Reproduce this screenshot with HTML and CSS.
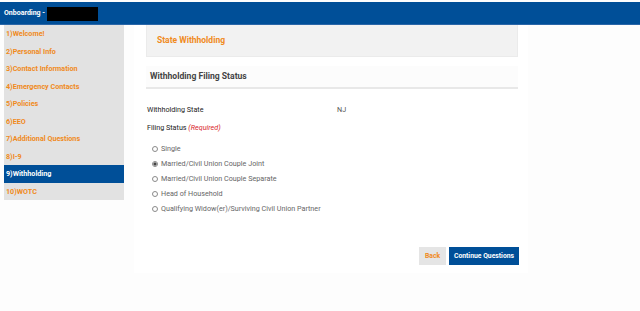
FILE: index.html
```html
<!DOCTYPE html>
<html lang="en">
<head>
    <meta charset="UTF-8">
    <meta name="viewport" content="width=device-width, initial-scale=1.0">
    <title>Onboarding - Withholding</title>
    <link rel="stylesheet" href="styles.css">
</head>
<body>
    <div class="topbar">
        <span class="brand">Onboarding -</span>
        <span class="redacted"></span>
    </div>

    <div class="layout">
        <ul class="steps">
            <li>1)Welcome!</li>
            <li>2)Personal Info</li>
            <li>3)Contact Information</li>
            <li>4)Emergency Contacts</li>
            <li>5)Policies</li>
            <li>6)EEO</li>
            <li>7)Additional Questions</li>
            <li>8)I-9</li>
            <li class="active">9)Withholding</li>
            <li>10)WOTC</li>
        </ul>

        <div class="main">
            <div class="page-title">State Withholding</div>

            <div class="section-title">Withholding Filing Status</div>

            <div class="field-row first">
                <span class="field-label">Withholding State</span>
                <span class="field-value">NJ</span>
            </div>

            <div class="field-row">
                <span class="field-label">Filing Status <em class="required">(Required)</em></span>
            </div>

            <div class="radios">
                <label class="radio"><input type="radio" name="filing"> Single</label>
                <label class="radio"><input type="radio" name="filing" checked> Married/Civil Union Couple Joint</label>
                <label class="radio"><input type="radio" name="filing"> Married/Civil Union Couple Separate</label>
                <label class="radio"><input type="radio" name="filing"> Head of Household</label>
                <label class="radio"><input type="radio" name="filing"> Qualifying Widow(er)/Surviving Civil Union Partner</label>
            </div>

            <div class="actions">
                <button class="btn-back">Back</button>
                <button class="btn-continue">Continue Questions</button>
            </div>
        </div>
    </div>
</body>
</html>
```

FILE: styles.css
```css
body {
    margin: 0;
    font-family: Roboto, "Liberation Sans", Arial, sans-serif;
    background-color: #fdfdfd;
    color: #333;
}
.topbar {
    margin-top: 2px;
    height: 22px;
    background-color: #004f98;
    display: flex;
    align-items: center;
    padding-left: 4px;
    border-bottom: 1px solid #2a66a8;
}
.brand {
    color: white;
    font-weight: bold;
    font-size: 7px;
}
.redacted {
    display: inline-block;
    width: 51px;
    height: 14px;
    background: black;
    margin-left: 2px;
    margin-top: 2px;
}
.layout {
    display: flex;
    align-items: flex-start;
}
.steps {
    list-style: none;
    margin: 0 0 0 4px;
    padding: 0;
    width: 120px;
    background-color: #e2e2e2;
}
.steps li {
    height: 17.5px;
    line-height: 17.5px;
    padding-left: 2px;
    font-size: 7.2px;
    font-weight: bold;
    color: #f08a1c;
}
.steps li.active {
    background-color: #004f98;
    color: white;
}
.main {
    width: 394px;
    margin-left: 10px;
    background: white;
    padding: 0 10px 7px 12px;
    box-sizing: border-box;
    height: 248px;
}
.page-title {
    background-color: #f2f2f2;
    border: 1px solid #ebebeb;
    border-top: none;
    height: 31px;
    line-height: 31px;
    padding-left: 10px;
    font-size: 8.5px;
    font-weight: bold;
    color: #f08a1c;
}
.section-title {
    margin-top: 9px;
    height: 21px;
    line-height: 21px;
    padding-left: 4px;
    font-size: 8.6px;
    font-weight: bold;
    color: #444;
    background: #fcfcfc;
    border-bottom: 2px solid #e8e8e8;
}
.field-row {
    display: flex;
    font-size: 7.2px;
    margin-top: 8px;
    height: 10px;
    line-height: 10px;
    padding-left: 1px;
}
.field-row.first {
    margin-top: 16px;
}
.field-label {
    width: 190px;
    color: #222;
}
.field-value {
    color: #555;
}
.required {
    color: #d9262c;
}
.radios {
    margin-top: 8px;
    padding-left: 5px;
}
.radio {
    display: flex;
    align-items: center;
    height: 15px;
    font-size: 7.2px;
    color: #666;
}
.radio input {
    appearance: none;
    width: 6px;
    height: 6px;
    margin: 0 3px 0 1px;
    border: 1px solid #8a8a8a;
    border-radius: 50%;
    background: white;
}
.radio input:checked {
    background: radial-gradient(circle, #444 0 1.4px, white 1.8px);
}
.actions {
    display: flex;
    justify-content: flex-end;
    gap: 3px;
    margin-top: 31px;
    margin-right: -1px;
}
.actions button {
    height: 18px;
    padding: 0;
    border: none;
    font-family: inherit;
    font-size: 6.8px;
    font-weight: bold;
    white-space: nowrap;
    cursor: pointer;
}
.btn-back {
    width: 27px;
    background-color: #e5e5e5;
    color: #f08a1c;
}
.btn-continue {
    width: 70px;
    background-color: #004f98;
    color: white;
}
```
